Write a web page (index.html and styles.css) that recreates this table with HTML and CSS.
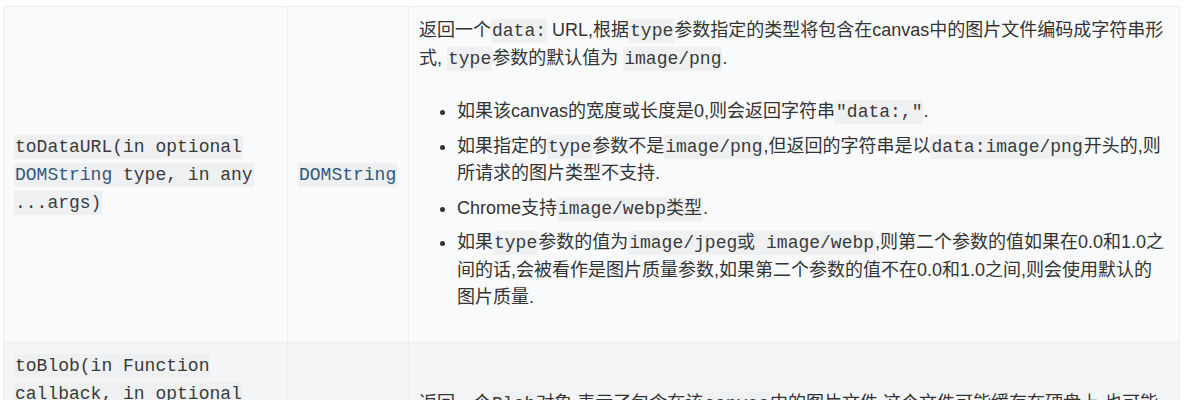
FILE: index.html
```html
<!DOCTYPE html>
<html lang="zh-CN">
<head>
<meta charset="utf-8">
<link rel="stylesheet" href="styles.css">
</head>
<body>
<div class="page">
<table class="api">
  <colgroup>
    <col class="c-method">
    <col class="c-type">
    <col class="c-desc">
  </colgroup>
  <tbody>
    <tr class="row-odd">
      <td class="cell code-cell"><code>toDataURL(in optional</code> <code><span class="t">DOMString</span> type, in any</code> <code>...args)</code></td>
      <td class="cell code-cell"><code class="t">DOMString</code></td>
      <td class="cell desc">
        <p class="para">返回一个<code>data:</code> URL,根据<code>type</code>参数指定的类型将包含在canvas中的图片文件编码成字符串形式, <code>type</code>参数的默认值为 <code>image/png</code>.</p>
        <ul class="list">
          <li>如果该canvas的宽度或长度是0,则会返回字符串<code>"data:,"</code>.</li>
          <li>如果指定的<code>type</code>参数不是<code>image/png</code>,但返回的字符串是以<code>data:image/png</code>开头的,则所请求的图片类型不支持.</li>
          <li>Chrome支持<code>image/webp类型</code>.</li>
          <li>如果<code>type</code>参数的值为<code>image/jpeg或 image/webp</code>,则第二个参数的值如果在0.0和1.0之间的话,会被看作是图片质量参数,如果第二个参数的值不在0.0和1.0之间,则会使用默认的图片质量.</li>
        </ul>
      </td>
    </tr>
    <tr class="row-even">
      <td class="cell code-cell"><code>toBlob(in Function</code> <code>callback, in optional</code> <code><span class="t">DOMString</span> type, in any</code> <code>...args)</code></td>
      <td class="cell"></td>
      <td class="cell desc">
        <p class="para lead">返回一个<code>Blob</code>对象,表示了包含在该<code>canvas</code>中的图片文件,这个文件可能缓存在硬盘上,也可能存储在内存中,这由浏览器决定.</p>
      </td>
    </tr>
  </tbody>
</table>
</div>
</body>
</html>
```

FILE: styles.css
```css
html, body {
  margin: 0;
  padding: 0;
  background: #ffffff;
}

.page {
  padding: 6px 6px 0 3px;
  font-family: "Liberation Sans", "Noto Sans CJK SC", sans-serif;
  font-size: 18px;
  line-height: 27.5px;
  color: #333333;
}

.api {
  width: 100%;
  border-collapse: collapse;
  table-layout: fixed;
  border: 1px solid #e9ebee;
}

.c-method { width: 284px; }
.c-type { width: 121px; }

.row-odd { background: #f9fafb; }
.row-even { background: #f4f5f7; }

.cell {
  border: 1px solid #eceef1;
  padding: 8px 10px;
  vertical-align: middle;
}

.code-cell {
  line-height: 28px;
}

.desc {
  padding: 10px 10px 8px 10px;
}

code {
  font-family: "Liberation Mono", monospace;
  font-size: 18px;
  line-height: 1;
  background: #eef0f2;
  color: #3a3a3a;
  padding: 2px 1px;
}

.t {
  color: #34577d;
}

.para {
  margin: 0;
}

.lead {
  padding-top: 20px;
}

.list {
  margin: 26px 0 22px 0;
  padding-left: 38px;
}

.list li {
  margin: 0 0 7px 0;
}

.list li:last-child {
  margin-bottom: 0;
}
```
